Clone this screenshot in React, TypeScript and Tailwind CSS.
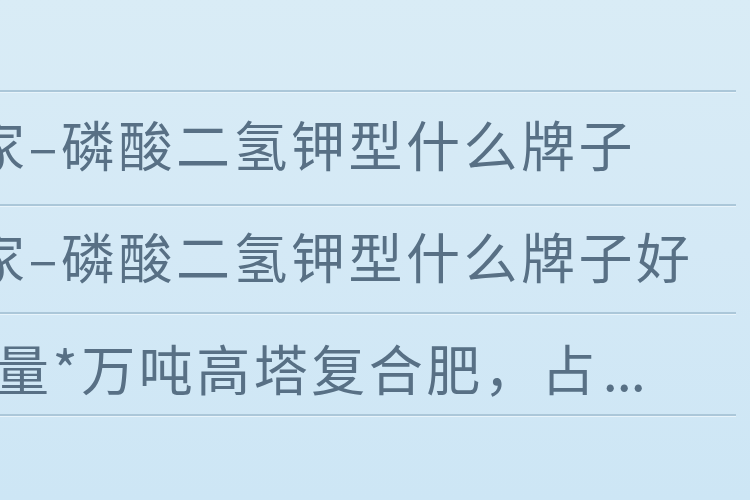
import React from "react";

const rows = [
  { text: "家–磷酸二氢钾型什么牌子", tail: "", h: "h-[114px]", ml: "-ml-[29px]", pad: "pb-[8px]" },
  { text: "家–磷酸二氢钾型什么牌子好", tail: "", h: "h-[108px]", ml: "-ml-[29px]", pad: "pb-[6px]" },
  { text: "量*万吨高塔复合肥，占", tail: "...", h: "h-[102px]", ml: "-ml-[5px]", pad: "pt-[8px]" },
];

export default function App() {
  return (
    <div
      className="w-[750px] h-[500px] overflow-hidden bg-gradient-to-b from-[#d9ecf6] via-[#d4e9f6] to-[#cde6f5] flex flex-col"
      style={{ fontFamily: '"Noto Sans CJK SC", "Noto Sans", sans-serif' }}
    >
      <div className="h-[90px] shrink-0" />
      <div className="w-[736px] flex flex-col">
        {rows.map((r, i) => (
          <div
            key={i}
            className={`${r.h} ${r.pad} shrink-0 border-t-2 border-[#abc7d9] shadow-[inset_0_1px_0_#e8f4fb] flex items-center overflow-hidden`}
          >
            <span
              className={`${r.ml} whitespace-nowrap text-[54px] leading-none text-[#587085] tracking-[3.5px] blur-[0.4px]`}
            >
              {r.text}
              {r.tail && <span className="tracking-[-1px] ml-[4px]">{r.tail}</span>}
            </span>
          </div>
        ))}
        <div className="border-t-2 border-[#abc7d9] shadow-[inset_0_1px_0_#e8f4fb] h-[90px]" />
      </div>
    </div>
  );
}
